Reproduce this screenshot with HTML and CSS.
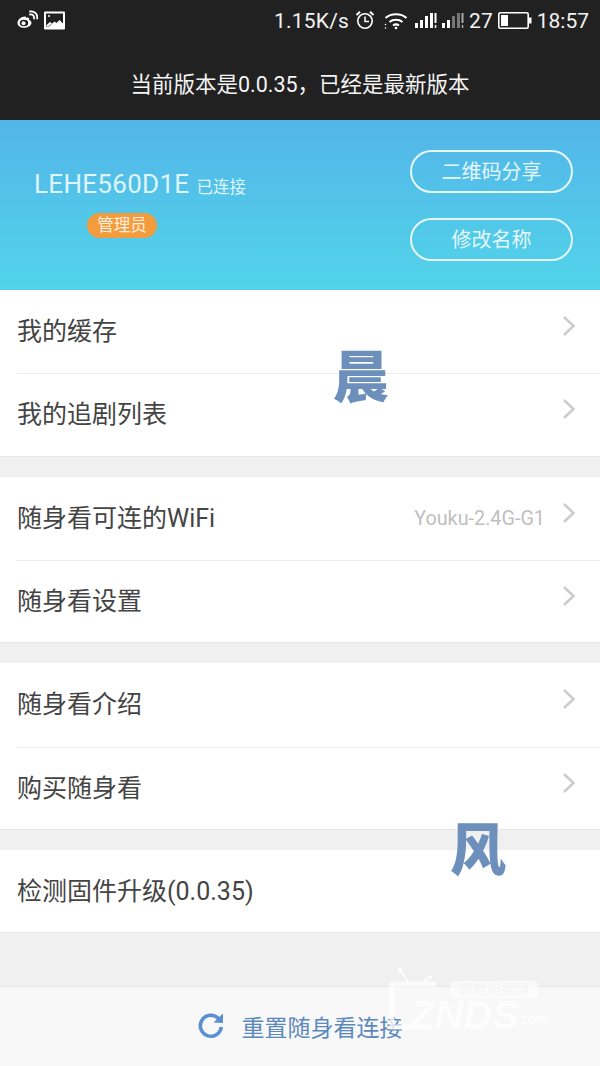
FILE: index.html
```html
<!DOCTYPE html>
<html lang="zh-CN">
<head>
<meta charset="utf-8">
<title>随身看</title>
<link rel="stylesheet" href="styles.css">
</head>
<body>
<div class="page">
  <div class="top">
    <div class="status">
      <svg class="ico-weibo" width="22" height="20" viewBox="0 0 22 20"><path d="M9 6.500C5 6.500 1.500 9.500 1.500 13c0 3 3 4.800 6.500 4.800 4.500 0 7.500-2.600 7.500-5 0-1.800-1.600-2.500-2.500-2.800.6-1.500.2-3.300-3-2.200C10 7 9.500 6.500 9 6.500z" fill="#fff"/><ellipse cx="8" cy="13" rx="4.200" ry="3.200" fill="#212121"/><circle cx="7.500" cy="13.200" r="2" fill="#fff"/><path d="M14 4.500c2.500-.5 4.500 1.500 4 4M14 1.500c4.500-.8 8 3 7 7" fill="none" stroke="#fff" stroke-width="1.800" stroke-linecap="round"/></svg>
      <svg class="ico-pic" width="21" height="19" viewBox="0 0 21 19"><rect width="21" height="18" y=".5" rx="1" fill="#fff"/><path d="M2 2.500h17v10l-3.500-3.500-3 3-2 -1.500L5 15.500H2z" fill="#212121"/><path d="M2 14.500 6 11l2 1.500-4 3z" fill="#fff"/><circle cx="5" cy="5" r="1" fill="#fff"/></svg>
      <div class="status-right">
        <span class="st-text speed">1.15K/s</span>
        <svg class="ico-alarm" width="20" height="20" viewBox="0 0 20 20" fill="none" stroke="#fff"><circle cx="10" cy="11" r="7.200" stroke-width="1.600"/><path d="M10 6.500V11.500H14" stroke-width="1.500"/><path d="M1.500 5 5 1.800M18.500 5 15 1.800" stroke-width="2"/></svg>
        <svg class="ico-wifi" width="24" height="19" viewBox="0 0 24 19" fill="none" stroke="#fff" stroke-width="2"><path d="M1.500 7C7 2 17 2 22.500 7M5.500 11c3.500-3 9.500-3 13 0M9 14.500c2-1.500 4-1.500 6 0"/><circle cx="12" cy="17" r="1.300" fill="#fff" stroke="none"/><circle cx="1.500" cy="13.500" r=".8" fill="#fff" stroke="none"/><circle cx="1.500" cy="17" r=".8" fill="#fff" stroke="none"/></svg>
        <svg class="ico-sig" width="22" height="18" viewBox="0 0 22 18" fill="#fff"><rect x="0" y="12" width="3" height="5"/><rect x="5" y="9" width="3" height="8"/><rect x="10" y="5" width="3" height="12"/><rect x="15" y="2" width="3" height="15"/><rect x="19.500" y="2" width="2" height="10"/><rect x="19.800" y="14" width="1.500" height="3"/></svg>
        <svg class="ico-sig" width="22" height="18" viewBox="0 0 22 18"><rect x="0" y="12" width="3" height="5" fill="#fff"/><rect x="5" y="9" width="3" height="8" fill="#fff"/><rect x="10" y="5" width="3" height="12" fill="#777"/><rect x="15" y="2" width="3" height="15" fill="#777"/><rect x="19.500" y="2" width="2" height="10" fill="#aaa"/><rect x="19.800" y="14" width="1.500" height="3" fill="#aaa"/></svg>
        <span class="st-text">27</span>
        <svg class="ico-batt" width="34" height="17" viewBox="0 0 34 17"><rect x=".8" y=".8" width="29.400" height="15.400" rx="1.500" fill="none" stroke="#fff" stroke-width="1.600"/><rect x="3" y="3" width="7" height="11" fill="#fff"/><rect x="31" y="5.500" width="2.500" height="6" fill="#fff"/></svg>
        <span class="st-text">18:57</span>
      </div>
    </div>
    <div class="version">当前版本是0.0.35，已经是最新版本</div>
  </div>

  <header class="hero">
    <div class="device">
      <div class="device-line"><span class="device-name">LEHE560D1E</span><span class="device-state">已连接</span></div>
      <span class="role">管理员</span>
    </div>
    <div class="hero-actions">
      <div class="pill">二维码分享</div>
      <div class="pill">修改名称</div>
    </div>
  </header>

  <main class="list">
    <section class="group">
      <div class="row"><span class="label">我的缓存</span><svg class="chev" width="14" height="22" viewBox="0 0 14 22"><path d="M2 2l9.500 9L2 20" fill="none" stroke="#ccc" stroke-width="2.500"/></svg></div>
      <div class="row"><span class="label">我的追剧列表</span><svg class="chev" width="14" height="22" viewBox="0 0 14 22"><path d="M2 2l9.500 9L2 20" fill="none" stroke="#ccc" stroke-width="2.500"/></svg></div>
    </section>
    <section class="group">
      <div class="row"><span class="label">随身看可连的WiFi</span><span class="value">Youku-2.4G-G1</span><svg class="chev" width="14" height="22" viewBox="0 0 14 22"><path d="M2 2l9.500 9L2 20" fill="none" stroke="#ccc" stroke-width="2.500"/></svg></div>
      <div class="row"><span class="label">随身看设置</span><svg class="chev" width="14" height="22" viewBox="0 0 14 22"><path d="M2 2l9.500 9L2 20" fill="none" stroke="#ccc" stroke-width="2.500"/></svg></div>
    </section>
    <section class="group">
      <div class="row"><span class="label">随身看介绍</span><svg class="chev" width="14" height="22" viewBox="0 0 14 22"><path d="M2 2l9.500 9L2 20" fill="none" stroke="#ccc" stroke-width="2.500"/></svg></div>
      <div class="row"><span class="label">购买随身看</span><svg class="chev" width="14" height="22" viewBox="0 0 14 22"><path d="M2 2l9.500 9L2 20" fill="none" stroke="#ccc" stroke-width="2.500"/></svg></div>
    </section>
    <section class="group">
      <div class="row"><span class="label">检测固件升级(0.0.35)</span></div>
    </section>
  </main>

  <footer class="reset">
    <svg class="reset-ico" width="28" height="28" viewBox="0 0 28 28"><path d="M21.500 7.500A10.500 10.500 0 1 0 24.300 16" fill="none" stroke="#5a8fd0" stroke-width="3.600"/><path d="M16.500 11.500 26 12V2.500z" fill="#5a8fd0"/></svg>
    <span class="reset-text">重置随身看连接</span>
  </footer>

  <div class="mark mark-chen">晨</div>
  <div class="mark mark-feng">风</div>
  <div class="wm">
    <svg class="wm-tv" width="60" height="66" viewBox="0 0 60 66" fill="none" stroke="#fff" stroke-opacity=".75"><path d="M14 5 23 18M44 12 36 18" stroke-width="2"/><circle cx="14" cy="5" r="2.500" fill="#fff" fill-opacity=".75" stroke="none"/><circle cx="44" cy="12" r="2" fill="#fff" fill-opacity=".75" stroke="none"/><path d="M50 19H6V62H38" stroke-width="5"/></svg>
    <span class="wm-tag">智能电视网</span>
    <span class="wm-name">ZNDS</span>
    <span class="wm-com">.com</span>
  </div>
</div>
</body>
</html>
```
FILE: styles.css
```css
* { box-sizing: border-box; }
html, body { margin: 0; padding: 0; }
body {
  width: 600px;
  height: 1066px;
  overflow: hidden;
  font-family: Roboto, "Noto Sans CJK SC", sans-serif;
  background: #f0f0f0;
}
.page {
  position: relative;
  width: 600px;
  height: 1066px;
  display: flex;
  flex-direction: column;
}
.top {
  height: 120px;
  background: #212121;
  color: #fff;
  flex: none;
}
.status {
  height: 40px;
  display: flex;
  align-items: center;
  padding: 0 11px 0 16px;
  gap: 6px;
}
.status-right {
  margin-left: auto;
  display: flex;
  align-items: center;
  gap: 5px;
}
.st-text { font-size: 21px; line-height: 40px; color: #f2f2f2; padding-top: 2px; }
.speed { margin-right: 1px; letter-spacing: .2px; }
.ico-alarm { margin-right: 4px; }
.ico-wifi { margin-right: 2px; }
.version {
  height: 48px;
  margin-top: 21px;
  text-align: center;
  font-size: 21.500px;
  line-height: 48px;
  color: #f4f4f4;
}
.hero {
  height: 170px;
  flex: none;
  background: linear-gradient(#53b5e8, #52d4ea);
  display: flex;
  justify-content: space-between;
  padding: 30px 27px 0 34px;
  color: #fff;
}
.device {
  display: flex;
  flex-direction: column;
  align-items: flex-start;
  padding-top: 17px;
}
.device-line { display: flex; align-items: baseline; gap: 7px; white-space: nowrap; color: #dff5fb; }
.device-name { font-size: 26px; line-height: 34px; letter-spacing: .3px; }
.device-state { font-size: 16.500px; }
.role {
  margin-top: 12px;
  margin-left: 53px;
  width: 70px;
  height: 25px;
  border-radius: 13px;
  background: #f39c3d;
  color: #fdeedd;
  font-size: 16.500px;
  line-height: 26px;
  text-align: center;
}
.hero-actions { display: flex; flex-direction: column; gap: 25px; }
.pill {
  width: 163px;
  height: 43px;
  border: 2px solid #e6f7fc;
  border-radius: 22px;
  font-size: 20px;
  line-height: 41px;
  text-align: center;
  color: #e6f7fc;
}
.list { flex: none; display: flex; flex-direction: column; gap: 20px; }
.group { background: #fff; box-shadow: inset 0 -1px 0 #e6e6e6; }
.row {
  height: 83.330px;
  display: flex;
  align-items: center;
  padding: 0 25px 5px 17px;
  position: relative;
}
.row + .row::before {
  content: "";
  position: absolute;
  left: 17px;
  right: 0;
  top: 0;
  height: 1px;
  background: #ececec;
}
.label { font-size: 25px; color: #444; white-space: nowrap; }
.value { margin-left: auto; margin-top: 5px; font-size: 19.800px; color: #c0c0c0; margin-right: 17px; }
.chev { flex: none; margin-left: auto; margin-top: -6px; margin-right: -1px; }
.value + .chev { margin-left: 0; }
.reset {
  position: absolute;
  left: 0;
  right: 0;
  bottom: 0;
  height: 80px;
  background: #f8f8f8;
  border-top: 1px solid #e8e8e8;
  display: flex;
  align-items: center;
  justify-content: center;
  gap: 17px;
  padding: 0 1px 2px 0;
}
.reset-ico { margin-bottom: 1px; }
.reset-text { font-size: 23px; color: #5b88bd; }
.mark {
  position: absolute;
  font-family: "Noto Sans CJK SC", sans-serif;
  font-weight: 900;
  font-size: 56px;
  line-height: 56px;
  color: #6d8fbc;
}
.mark-chen { left: 333px; top: 345px; }
.mark-feng { left: 450px; top: 818px; }
.wm { position: absolute; left: 386px; top: 965px; width: 180px; height: 80px; color: #fff; }
.wm-tv { position: absolute; left: 0; top: 0; }
.wm-tag {
  position: absolute;
  left: 64px;
  top: 16px;
  width: 88px;
  height: 17px;
  border-radius: 4px;
  background: rgba(255, 255, 255, .6);
  color: #f4f4f4;
  font-size: 14px;
  line-height: 17px;
  text-align: center;
  white-space: nowrap;
}
.wm-name {
  position: absolute;
  left: 24px;
  top: 35px;
  font-family: "Liberation Sans", sans-serif;
  font-size: 40px;
  font-weight: 700;
  font-style: italic;
  line-height: 30px;
  opacity: .75;
}
.wm-com {
  position: absolute;
  left: 131px;
  top: 46px;
  font-size: 14px;
  font-weight: 700;
  line-height: 16px;
  opacity: .7;
}
```
